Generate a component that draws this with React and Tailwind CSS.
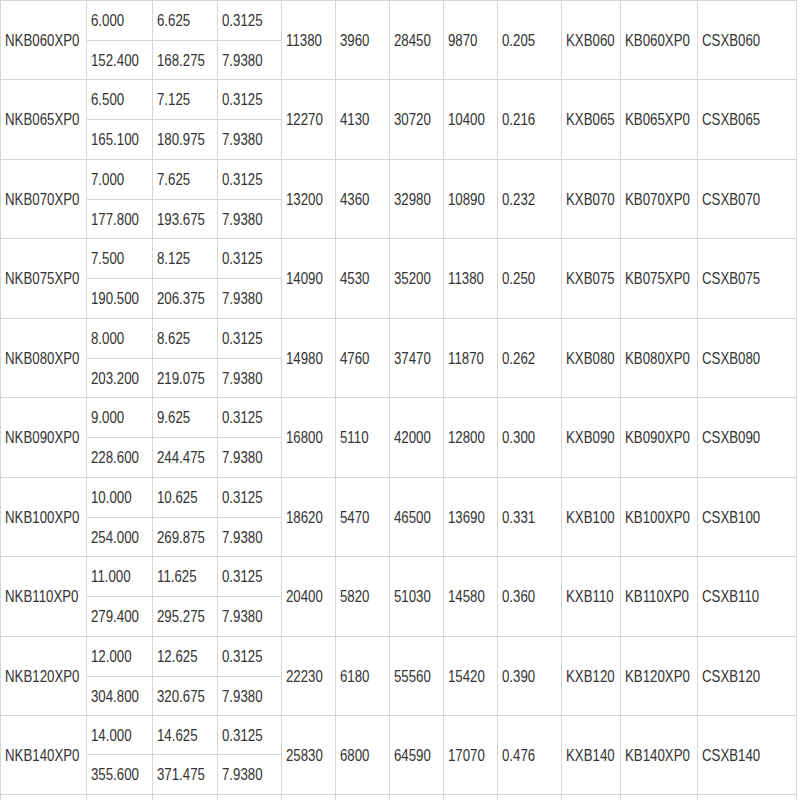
const groups = [
  { rows: "grid-rows-[40px_39px]", name: "NKB060XP0", inch: ["6.000", "6.625", "0.3125"], mm: ["152.400", "168.275", "7.9380"], rest: ["11380", "3960", "28450", "9870", "0.205", "KXB060", "KB060XP0", "CSXB060"] },
  { rows: "grid-rows-[40px_40px]", name: "NKB065XP0", inch: ["6.500", "7.125", "0.3125"], mm: ["165.100", "180.975", "7.9380"], rest: ["12270", "4130", "30720", "10400", "0.216", "KXB065", "KB065XP0", "CSXB065"] },
  { rows: "grid-rows-[40px_39px]", name: "NKB070XP0", inch: ["7.000", "7.625", "0.3125"], mm: ["177.800", "193.675", "7.9380"], rest: ["13200", "4360", "32980", "10890", "0.232", "KXB070", "KB070XP0", "CSXB070"] },
  { rows: "grid-rows-[40px_40px]", name: "NKB075XP0", inch: ["7.500", "8.125", "0.3125"], mm: ["190.500", "206.375", "7.9380"], rest: ["14090", "4530", "35200", "11380", "0.250", "KXB075", "KB075XP0", "CSXB075"] },
  { rows: "grid-rows-[40px_39px]", name: "NKB080XP0", inch: ["8.000", "8.625", "0.3125"], mm: ["203.200", "219.075", "7.9380"], rest: ["14980", "4760", "37470", "11870", "0.262", "KXB080", "KB080XP0", "CSXB080"] },
  { rows: "grid-rows-[40px_40px]", name: "NKB090XP0", inch: ["9.000", "9.625", "0.3125"], mm: ["228.600", "244.475", "7.9380"], rest: ["16800", "5110", "42000", "12800", "0.300", "KXB090", "KB090XP0", "CSXB090"] },
  { rows: "grid-rows-[40px_39px]", name: "NKB100XP0", inch: ["10.000", "10.625", "0.3125"], mm: ["254.000", "269.875", "7.9380"], rest: ["18620", "5470", "46500", "13690", "0.331", "KXB100", "KB100XP0", "CSXB100"] },
  { rows: "grid-rows-[40px_40px]", name: "NKB110XP0", inch: ["11.000", "11.625", "0.3125"], mm: ["279.400", "295.275", "7.9380"], rest: ["20400", "5820", "51030", "14580", "0.360", "KXB110", "KB110XP0", "CSXB110"] },
  { rows: "grid-rows-[40px_39px]", name: "NKB120XP0", inch: ["12.000", "12.625", "0.3125"], mm: ["304.800", "320.675", "7.9380"], rest: ["22230", "6180", "55560", "15420", "0.390", "KXB120", "KB120XP0", "CSXB120"] },
  { rows: "grid-rows-[39px_40px]", name: "NKB140XP0", inch: ["14.000", "14.625", "0.3125"], mm: ["355.600", "371.475", "7.9380"], rest: ["25830", "6800", "64590", "17070", "0.476", "KXB140", "KB140XP0", "CSXB140"] },
];

const cols =
  "grid-cols-[86px_66px_65px_64px_54px_54px_54px_54px_64px_59px_77px_99px]";

const Cell = ({ children, span }) => (
  <div
    className={`flex items-center border-r border-b border-[#d6d6d6] pl-1 overflow-hidden whitespace-nowrap ${
      span ? "row-span-2" : ""
    }`}
  >
    <span className="inline-block origin-left scale-x-[0.78] text-[17px] leading-none">
      {children}
    </span>
  </div>
);

export default function App() {
  return (
    <div className="w-[800px] h-[800px] overflow-hidden bg-white text-[#333] font-['Liberation_Sans',Arial,sans-serif]">
      <div className="w-[797px] border-l border-t border-[#d6d6d6]">
        {groups.map((g) => (
          <div key={g.name} className={`grid ${cols} ${g.rows}`}>
            <Cell span>{g.name}</Cell>
            {g.inch.map((v, i) => (
              <Cell key={"i" + i}>{v}</Cell>
            ))}
            {g.rest.map((v, i) => (
              <Cell key={"r" + i} span>
                {v}
              </Cell>
            ))}
            {g.mm.map((v, i) => (
              <Cell key={"m" + i}>{v}</Cell>
            ))}
          </div>
        ))}
        {/* next row, cut off by the bottom edge */}
        <div className={`grid ${cols} h-[40px]`}>
          {Array.from({ length: 12 }).map((_, i) => (
            <div key={i} className="border-r border-[#d6d6d6]" />
          ))}
        </div>
      </div>
    </div>
  );
}
